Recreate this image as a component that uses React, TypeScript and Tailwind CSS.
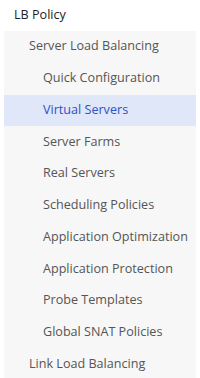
import React from 'react';

const items = [
    'Quick Configuration',
    'Virtual Servers',
    'Server Farms',
    'Real Servers',
    'Scheduling Policies',
    'Application Optimization',
    'Application Protection',
    'Probe Templates',
    'Global SNAT Policies',
];

export default function App() {
    const active = 'Virtual Servers';
    return (
        <div className="w-[200px] h-[378px] bg-white overflow-hidden text-[12.6px] font-['Segoe_UI','Open_Sans','Noto_Sans',sans-serif]">
            <div className="h-[31px] flex items-center pl-[14px] text-[#222]">LB Policy</div>
            <div className="ml-[4px] mr-[4px] bg-[#f7f7f7] h-[347px]">
                <div className="h-[31.75px] flex items-center pl-[25px] text-[#555]">Server Load Balancing</div>
                {items.map((item) => (
                    <div
                        key={item}
                        className={`h-[31.75px] flex items-center pl-[39px] whitespace-nowrap ${
                            item === active ? 'bg-[#dfe7f8] text-[#3050c8]' : 'text-[#555]'
                        }`}
                    >
                        {item}
                    </div>
                ))}
                <div className="h-[31.75px] flex items-center pl-[25px] text-[#555]">Link Load Balancing</div>
            </div>
        </div>
    );
}
